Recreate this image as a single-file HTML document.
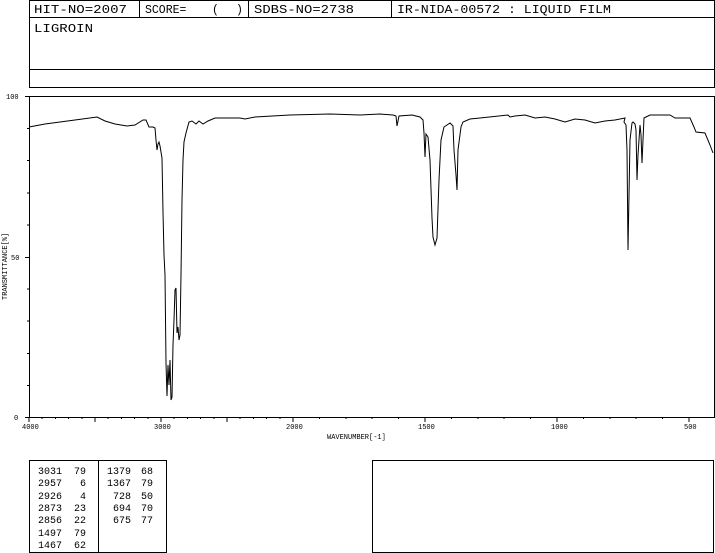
<!DOCTYPE html>
<html><head><meta charset="utf-8"><style>
html,body{margin:0;padding:0;background:#fff;width:715px;height:553px;overflow:hidden}
svg{display:block}
text{font-family:"Liberation Mono",monospace;fill:#000}
</style></head><body>
<svg width="715" height="553" viewBox="0 0 715 553" xmlns="http://www.w3.org/2000/svg">
<g fill="none" stroke="#000" stroke-width="1" shape-rendering="crispEdges">
<rect x="29.5" y="0.5" width="685" height="87"/>
<line x1="29" y1="17.5" x2="715" y2="17.5"/>
<line x1="139.5" y1="0" x2="139.5" y2="17"/>
<line x1="248.5" y1="0" x2="248.5" y2="17"/>
<line x1="391.5" y1="0" x2="391.5" y2="17"/>
<line x1="29" y1="69.5" x2="715" y2="69.5"/>
<rect x="29.5" y="96.5" width="685" height="321"/>
<rect x="29.5" y="460.5" width="137" height="92"/>
<line x1="98.5" y1="460" x2="98.5" y2="553"/>
<rect x="372.5" y="460.5" width="341" height="92"/>
<line x1="25" y1="96.5" x2="29" y2="96.5"/>
<line x1="25" y1="257.5" x2="29" y2="257.5"/>
<line x1="25" y1="417.5" x2="29" y2="417.5"/>
</g>
<g font-size="11.5">
<text x="34" y="13" textLength="93" lengthAdjust="spacingAndGlyphs">HIT-NO=2007</text>
<text x="145" y="13">SCORE=</text>
<text x="212" y="13">(</text>
<text x="236" y="13">)</text>
<text x="254" y="13" textLength="100" lengthAdjust="spacingAndGlyphs">SDBS-NO=2738</text>
<text x="397" y="13" textLength="214" lengthAdjust="spacingAndGlyphs">IR-NIDA-00572 : LIQUID FILM</text>
<text x="34" y="32" textLength="59" lengthAdjust="spacingAndGlyphs">LIGROIN</text>
</g>
<g font-size="7">
<text x="6" y="99">100</text>
<text x="11" y="260">50</text>
<text x="14" y="420">0</text>
<text x="22" y="429">4000</text>
<text x="154" y="429">3000</text>
<text x="286" y="429">2000</text>
<text x="418" y="429">1500</text>
<text x="551" y="429">1000</text>
<text x="684" y="429">500</text>
<text x="327" y="439">WAVENUMBER[-1]</text>
<text transform="translate(7,300) rotate(-90)">TRANSMITTANCE[%]</text>
</g>
<g stroke="#000" stroke-width="1" shape-rendering="crispEdges">
<path d="M29 417v5M42.2 417v2M55.4 417v2M68.6 417v2M81.8 417v2M95 417v5M108.2 417v2M121.4 417v2M134.6 417v2M147.8 417v2M161 417v5M174.2 417v2M187.4 417v2M200.6 417v2M213.8 417v2M227 417v5M240.2 417v2M253.4 417v2M266.6 417v2M279.8 417v2M293 417v5M319.4 417v2M345.8 417v2M372.2 417v2M398.6 417v2M425 417v5M451.4 417v2M477.8 417v2M504.2 417v2M530.6 417v2M557 417v5M583.4 417v2M609.8 417v2M636.2 417v2M662.6 417v2M689 417v5"/>
<path d="M29 128.6h-2M29 160.7h-2M29 192.8h-2M29 224.9h-2M29 289.1h-2M29 321.2h-2M29 353.3h-2M29 385.4h-2"/>
</g>
<polyline fill="none" stroke="#000" stroke-width="1" points="29,127 45,124 60,122 75,120 97,117 105,121 115,124 127,126 135,125 143,120 146,120 149,127 153,127 155,128 156,140 157,150 158,144 159,142 160,146 162,158 163,212 164,255 165,275 166,363 167,396 168,365 169,385 170,360 171,400 172,397 173,345 174,320 175,290 176,288 177,333 178,327 179,340 180,335 181,275 182,200 183,160 184,142 186,133 189,122 192,121 196,124 199,121 203,124 208,121 215,118 240,118 245,119 255,117 290,115 330,114 360,115 380,114 393,115 396,116 397,126 399,116 412,115 420,117 423,120 424,133 425,157 426,134 428,137 430,160 432,218 433,237 435,245 437,238 439,180 441,140 444,127 450,123 453,126 454,150 456,175 457,190 458,150 461,127 463,122 470,119 480,118 508,115 510,117 515,116 525,115 535,118 545,117 555,119 565,122 575,119 585,120 595,123 605,121 615,120 625,118 624,122 626,125 627,150 628,250 629,195 630,140 632,123 633,122 635,124 636,130 637,180 638,155 640,125 641,135 642,163 643,140 644,118 650,115 670,115 675,118 690,118 694,127 696,132 705,133 710,145 713,153"/>
<g font-size="10">
<text x="38" y="474">3031</text><text x="74" y="474">79</text>
<text x="38" y="486">2957</text><text x="80" y="486">6</text>
<text x="38" y="499">2926</text><text x="80" y="499">4</text>
<text x="38" y="511">2873</text><text x="74" y="511">23</text>
<text x="38" y="523">2856</text><text x="74" y="523">22</text>
<text x="38" y="536">1497</text><text x="74" y="536">79</text>
<text x="38" y="548">1467</text><text x="74" y="548">62</text>
<text x="107" y="474">1379</text><text x="141" y="474">68</text>
<text x="107" y="486">1367</text><text x="141" y="486">79</text>
<text x="113" y="499">728</text><text x="141" y="499">50</text>
<text x="113" y="511">694</text><text x="141" y="511">70</text>
<text x="113" y="523">675</text><text x="141" y="523">77</text>
</g>
</svg>
</body></html>
